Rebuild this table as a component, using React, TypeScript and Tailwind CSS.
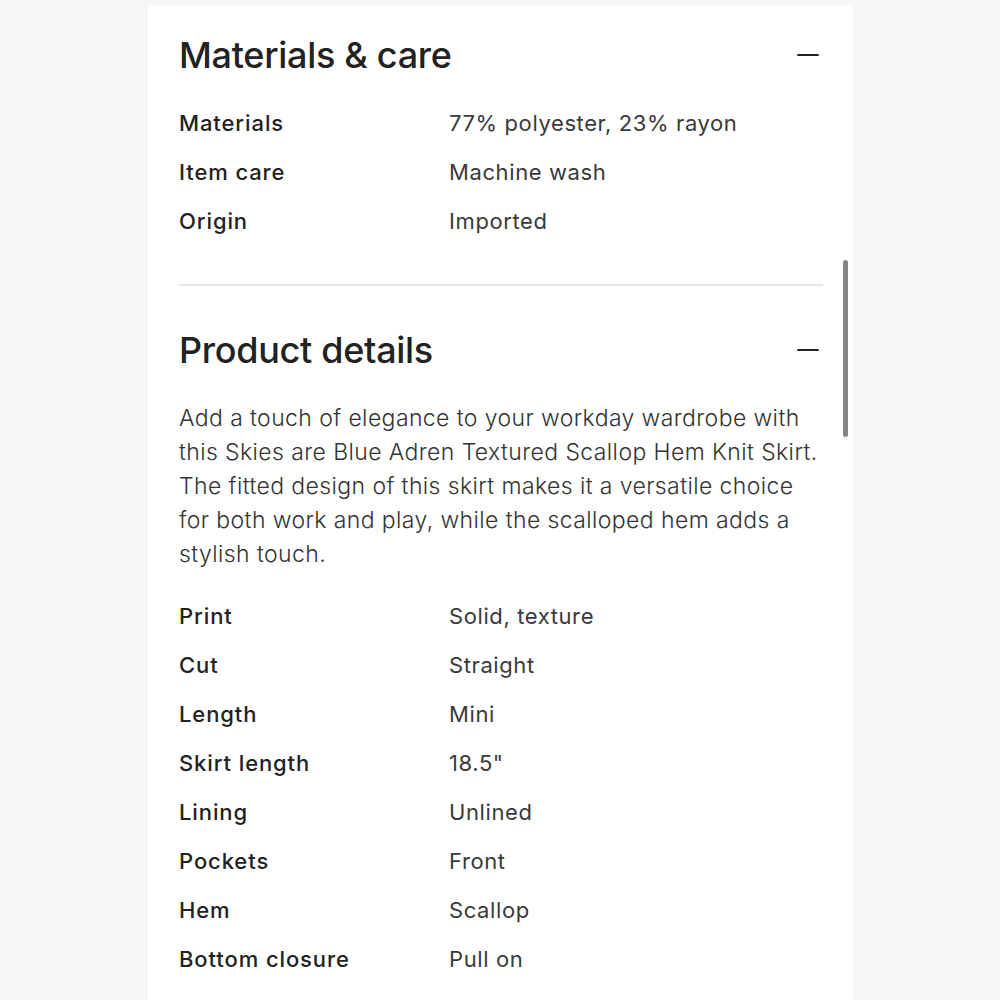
// ─── Product Info Panel ───────────────────────────────────────

const materials = [
  ['Materials', '77% polyester, 23% rayon'],
  ['Item care', 'Machine wash'],
  ['Origin', 'Imported'],
]

const details = [
  ['Print', 'Solid, texture'],
  ['Cut', 'Straight'],
  ['Length', 'Mini'],
  ['Skirt length', '18.5"'],
  ['Lining', 'Unlined'],
  ['Pockets', 'Front'],
  ['Hem', 'Scallop'],
  ['Bottom closure', 'Pull on'],
]

function SectionHeader({ title }: { title: string }) {
  return (
    <div className="flex items-center justify-between h-[44px]">
      <h2 className="text-[36px] leading-[44px] font-medium text-[#222] tracking-[-0.3px]">{title}</h2>
      <span className="block w-[22px] h-[2.5px] bg-[#222] rounded-full mr-[4px]" />
    </div>
  )
}

function SpecRows({ rows }: { rows: string[][] }) {
  return (
    <div className="flex flex-col">
      {rows.map(([label, value]) => (
        <div key={label} className="grid grid-cols-[270px_1fr] h-[49px] items-center text-[22px]">
          <span className="font-medium text-[#222] tracking-[0.9px]">{label}</span>
          <span className="font-normal text-[#3a3a3a] tracking-[0.6px]">{value}</span>
        </div>
      ))}
    </div>
  )
}

export default function App() {
  return (
    <div
      className="min-h-[1000px] w-full bg-[#f6f6f7] flex justify-center pl-[148px] pr-[147px] pt-[5px] overflow-hidden"
      style={{ fontFamily: 'Inter, "Noto Sans", sans-serif' }}
    >
      <div className="relative w-full bg-white pl-[31px] pr-[30px] pt-[28px] h-[995px]">
        {/* Materials & care */}
        <SectionHeader title="Materials & care" />
        <div className="mt-[22px]">
          <SpecRows rows={materials} />
        </div>

        <div className="mt-[38px] h-[2px] bg-[#e8e8e8]" />

        {/* Product details */}
        <div className="mt-[42px]">
          <SectionHeader title="Product details" />
        </div>
        <p className="mt-[29px] text-[23px] leading-[34px] text-[#333] font-light tracking-[0.4px]">
          Add a touch of elegance to your workday wardrobe with this Skies are Blue Adren Textured Scallop Hem Knit
          Skirt. The fitted design of this skirt makes it a versatile choice for both work and play, while the
          scalloped hem adds a stylish touch.
        </p>
        <div className="mt-[21px]">
          <SpecRows rows={details} />
        </div>

        {/* scrollbar */}
        <div className="absolute right-[5px] top-[255px] w-[5px] h-[177px] rounded-full bg-[#858585]" />
      </div>
    </div>
  )
}
